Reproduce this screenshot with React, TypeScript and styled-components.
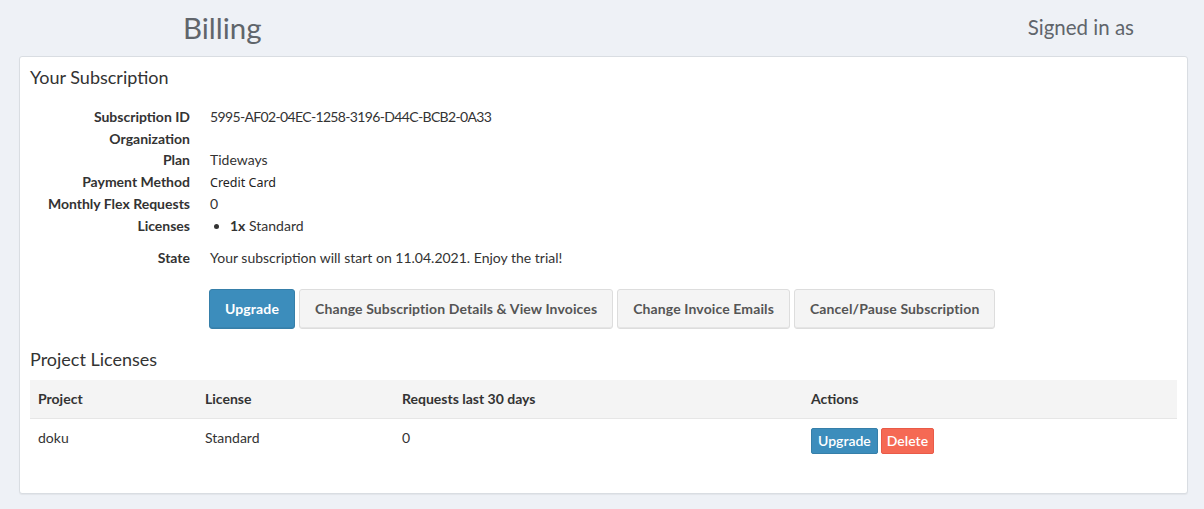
import { createGlobalStyle, styled } from "styled-components";

const GlobalStyle = createGlobalStyle`
  * { box-sizing: border-box; }
  body {
    margin: 0;
    background: #eef1f6;
    font-family: "Source Sans Pro", Lato, "Liberation Sans", sans-serif;
    font-size: 14px;
    color: #333;
  }
`;

const Header = styled.header`
  height: 56px;
  display: flex;
  align-items: center;
  justify-content: space-between;
  padding: 0 70px 0 183px;
  color: #60656b;

  h1 {
    margin: 0;
    font-size: 29.5px;
    font-weight: 400;
    line-height: 1;
  }

  .user {
    font-size: 20.5px;
    margin-top: -2px;
  }
`;

const Card = styled.section`
  margin: 0 16px 16px 19px;
  background: #fff;
  border: 1px solid #d9dde2;
  border-radius: 3px;
  box-shadow: 0 1px 1px rgba(0, 0, 0, 0.05);
  padding: 9px 10px 32px 10px;
`;

const Title = styled.h3`
  margin: 0;
  font-size: 18px;
  font-weight: 400;
  line-height: 22px;
`;

const Details = styled.dl`
  margin: 18px 0 0;
  display: grid;
  grid-template-columns: 160px 1fr;
  column-gap: 20px;
  line-height: 21.6px;
`;

const Term = styled.dt<{ $spaced?: boolean }>`
  font-weight: 700;
  text-align: right;
  margin-top: ${(p) => (p.$spaced ? "10px" : "0")};
`;

const Value = styled.dd<{ $spaced?: boolean; $tight?: boolean }>`
  margin: ${(p) => (p.$spaced ? "10px" : "0")} 0 0;
  letter-spacing: ${(p) => (p.$tight ? "-0.65px" : "normal")};
`;

const Mono = styled.span`
  font-family: "Noto Sans", "DejaVu Sans", sans-serif;
  font-size: 12.5px;
  color: #222;
`;

const LicenseList = styled.ul`
  margin: 0;
  padding-left: 20px;
`;

const Actions = styled.div`
  display: flex;
  gap: 4px;
  margin: 21px 0 0 179px;
`;

const Button = styled.button<{ $primary?: boolean }>`
  font-family: inherit;
  font-size: 14px;
  font-weight: 700;
  letter-spacing: 0.12px;
  line-height: 20px;
  padding: 9px 15px;
  border-radius: 3px;
  border: 1px solid ${(p) => (p.$primary ? "#367fa9" : "#ddd")};
  background: ${(p) => (p.$primary ? "#3c8dbc" : "#f4f4f4")};
  color: ${(p) => (p.$primary ? "#fff" : "#555")};
  box-shadow: inset 0 -1px 0 rgba(0, 0, 0, 0.06);
`;

const SubTitle = styled(Title)`
  margin-top: 19px;
`;

const Table = styled.table`
  width: 100%;
  margin-top: 10px;
  border-collapse: collapse;

  th {
    background: #f4f4f4;
    text-align: left;
    font-weight: 700;
    padding: 9px 8px;
    line-height: 20px;
    border-bottom: 1px solid #e6e6e6;
  }

  td {
    padding: 9px 8px 7px;
    line-height: 20px;
    vertical-align: top;
  }
`;

const SmallButton = styled.button<{ $danger?: boolean }>`
  font-family: inherit;
  font-size: 14px;
  font-weight: 600;
  line-height: 20px;
  padding: 2px ${(p) => (p.$danger ? "5px" : "6px")};
  margin-right: 3px;
  border-radius: 2px;
  border: 1px solid ${(p) => (p.$danger ? "#e95a48" : "#367fa9")};
  background: ${(p) => (p.$danger ? "#f56954" : "#3c8dbc")};
  color: #fff;
`;

export default function App() {
  return (
    <>
      <GlobalStyle />
      <Header>
        <h1>Billing</h1>
        <span className="user">Signed in as</span>
      </Header>
      <Card>
        <Title>Your Subscription</Title>
        <Details>
          <Term>Subscription ID</Term>
          <Value $tight>5995-AF02-04EC-1258-3196-D44C-BCB2-0A33</Value>
          <Term>Organization</Term>
          <Value></Value>
          <Term>Plan</Term>
          <Value>Tideways</Value>
          <Term>Payment Method</Term>
          <Value><Mono>Credit Card</Mono></Value>
          <Term>Monthly Flex Requests</Term>
          <Value>0</Value>
          <Term>Licenses</Term>
          <Value>
            <LicenseList>
              <li><b>1x</b> Standard</li>
            </LicenseList>
          </Value>
          <Term $spaced>State</Term>
          <Value $spaced>Your subscription will start on 11.04.2021. Enjoy the trial!</Value>
        </Details>
        <Actions>
          <Button $primary>Upgrade</Button>
          <Button>Change Subscription Details &amp; View Invoices</Button>
          <Button>Change Invoice Emails</Button>
          <Button>Cancel/Pause Subscription</Button>
        </Actions>
        <SubTitle>Project Licenses</SubTitle>
        <Table>
          <colgroup>
            <col style={{ width: 167 }} />
            <col style={{ width: 197 }} />
            <col style={{ width: 409 }} />
            <col />
          </colgroup>
          <thead>
            <tr>
              <th>Project</th>
              <th>License</th>
              <th>Requests last 30 days</th>
              <th>Actions</th>
            </tr>
          </thead>
          <tbody>
            <tr>
              <td>doku</td>
              <td>Standard</td>
              <td>0</td>
              <td>
                <SmallButton>Upgrade</SmallButton>
                <SmallButton $danger>Delete</SmallButton>
              </td>
            </tr>
          </tbody>
        </Table>
      </Card>
    </>
  );
}
